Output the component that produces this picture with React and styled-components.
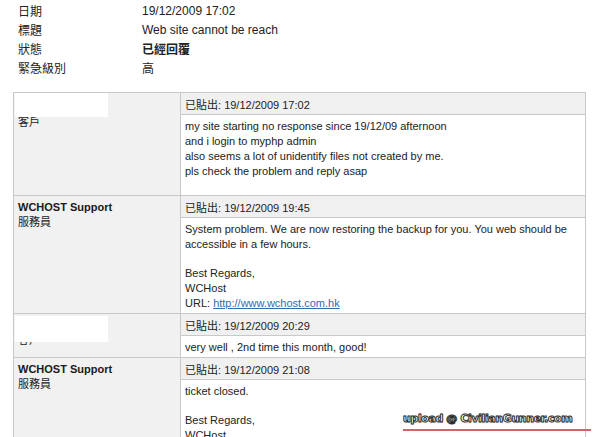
import React from "react";
import styled, { createGlobalStyle } from "styled-components";

const posts = [
  {
    name: null,
    role: "客戶",
    redact: { top: 0, height: 24 },
    stamp: "19/12/2009 17:02",
    lines: [
      "my site starting no response since 19/12/09 afternoon",
      "and i login to myphp admin",
      "also seems a lot of unidentify files not created by me.",
      "pls check the problem and reply asap",
      "",
    ],
  },
  {
    name: "WCHOST Support",
    role: "服務員",
    stamp: "19/12/2009 19:45",
    lines: [
      "System problem. We are now restoring the backup for you. You web should be accessible in a few hours.",
      "",
      "Best Regards,",
      "WCHost",
      { label: "URL: ", href: "http://www.wchost.com.hk" },
    ],
  },
  {
    name: null,
    role: "客戶",
    redact: { top: 2, height: 26 },
    stamp: "19/12/2009 20:29",
    lines: ["very well , 2nd time this month, good!"],
  },
  {
    name: "WCHOST Support",
    role: "服務員",
    stamp: "19/12/2009 21:08",
    lines: ["ticket closed.", "", "Best Regards,", "WCHost"],
  },
];

const details = [
  { label: "日期", value: "19/12/2009 17:02" },
  { label: "標題", value: "Web site cannot be reach" },
  { label: "狀態", value: "已經回覆", strong: true },
  { label: "緊急級別", value: "高" },
];

function App() {
  return (
    <Page>
      <GlobalStyle />
      <Details>
        {details.map((d) => (
          <DetailRow key={d.label}>
            <DetailLabel>{d.label}</DetailLabel>
            <DetailValue $strong={d.strong}>{d.value}</DetailValue>
          </DetailRow>
        ))}
      </Details>

      <Thread>
        {posts.map((p, i) => (
          <Post key={i}>
            <Author $first={i === 0}>
              <AuthorName>{p.name || "\u00a0"}</AuthorName>
              <AuthorRole>{p.role}</AuthorRole>
              {p.redact && (
                <Redaction $top={p.redact.top} $height={p.redact.height} />
              )}
            </Author>
            <Stamp>已貼出: {p.stamp}</Stamp>
            <Message>
              {p.lines.map((line, j) =>
                typeof line === "string" ? (
                  <Line key={j} $blank={!line}>
                    {line || "\u00a0"}
                  </Line>
                ) : (
                  <Line key={j}>
                    {line.label}
                    <Link href={line.href}>{line.href}</Link>
                  </Line>
                )
              )}
            </Message>
          </Post>
        ))}
      </Thread>

      <Watermark>upload @ CivilianGunner.com</Watermark>
    </Page>
  );
}

export default App;

const GlobalStyle = createGlobalStyle`
  html, body {
    margin: 0;
    padding: 0;
    background: #ffffff;
    overflow: hidden;
  }
  body {
    font-family: "Liberation Sans", "Noto Sans CJK TC", sans-serif;
    font-size: 11px;
    color: #222222;
  }
`;

const Page = styled.div`
  position: relative;
  width: 593px;
  height: 437px;
  overflow: hidden;
`;

const Details = styled.div`
  display: flex;
  flex-direction: column;
  padding-top: 1px;
`;

const DetailRow = styled.div`
  display: grid;
  grid-template-columns: 124px 1fr;
  height: 19px;
  align-items: center;
  padding-left: 18px;
`;

const DetailLabel = styled.span`
  font-size: 12px;
  color: #222222;
`;

const DetailValue = styled.span`
  font-size: 12px;
  color: #222222;
  font-weight: ${(p) => (p.$strong ? "bold" : "normal")};
`;

const Thread = styled.div`
  margin: 15px 0 0 13px;
  width: 571px;
  border-top: 1px solid #c9c9c9;
  border-left: 1px solid #c9c9c9;
  border-right: 1px solid #c9c9c9;
`;

const Post = styled.div`
  display: grid;
  grid-template-columns: 167px 1fr;
  grid-template-rows: 22px auto;
  border-bottom: 1px solid #c9c9c9;
`;

const Author = styled.div`
  position: relative;
  grid-row: 1 / span 2;
  background: #f1f1f1;
  border-right: 1px solid #c9c9c9;
  padding: ${(p) => (p.$first ? "7px" : "4px")} 4px 0 4px;
  line-height: 15px;
`;

const AuthorName = styled.div`
  font-weight: bold;
  color: #1a1a1a;
`;

const AuthorRole = styled.div`
  color: #222222;
`;

const Redaction = styled.div`
  position: absolute;
  left: 1px;
  top: ${(p) => p.$top}px;
  width: 93px;
  height: ${(p) => p.$height}px;
  background: #ffffff;
`;

const Stamp = styled.div`
  display: flex;
  align-items: center;
  padding: 1px 0 0 4px;
  background: #f0f0f0;
  border-bottom: 1px solid #c9c9c9;
  color: #222222;
`;

const Message = styled.div`
  padding: 4px 4px 2px 4px;
  line-height: 15px;
  background: #ffffff;
`;

const Line = styled.div`
  color: #222222;
  height: ${(p) => (p.$blank ? "14px" : "auto")};
`;

const Link = styled.a`
  color: #2a6db5;
  text-decoration: underline;
`;

const Watermark = styled.div`
  position: absolute;
  left: 403px;
  top: 412px;
  width: 188px;
  padding-bottom: 4px;
  border-bottom: 2px solid #d0646b;
  font-family: "DejaVu Sans", sans-serif;
  font-weight: bold;
  font-size: 11px;
  letter-spacing: -0.4px;
  color: #ffffff;
  -webkit-text-stroke: 0.8px #2a2a2a;
  text-shadow: 0 0 1px #333333, 0 0 1px #333333;
`;
